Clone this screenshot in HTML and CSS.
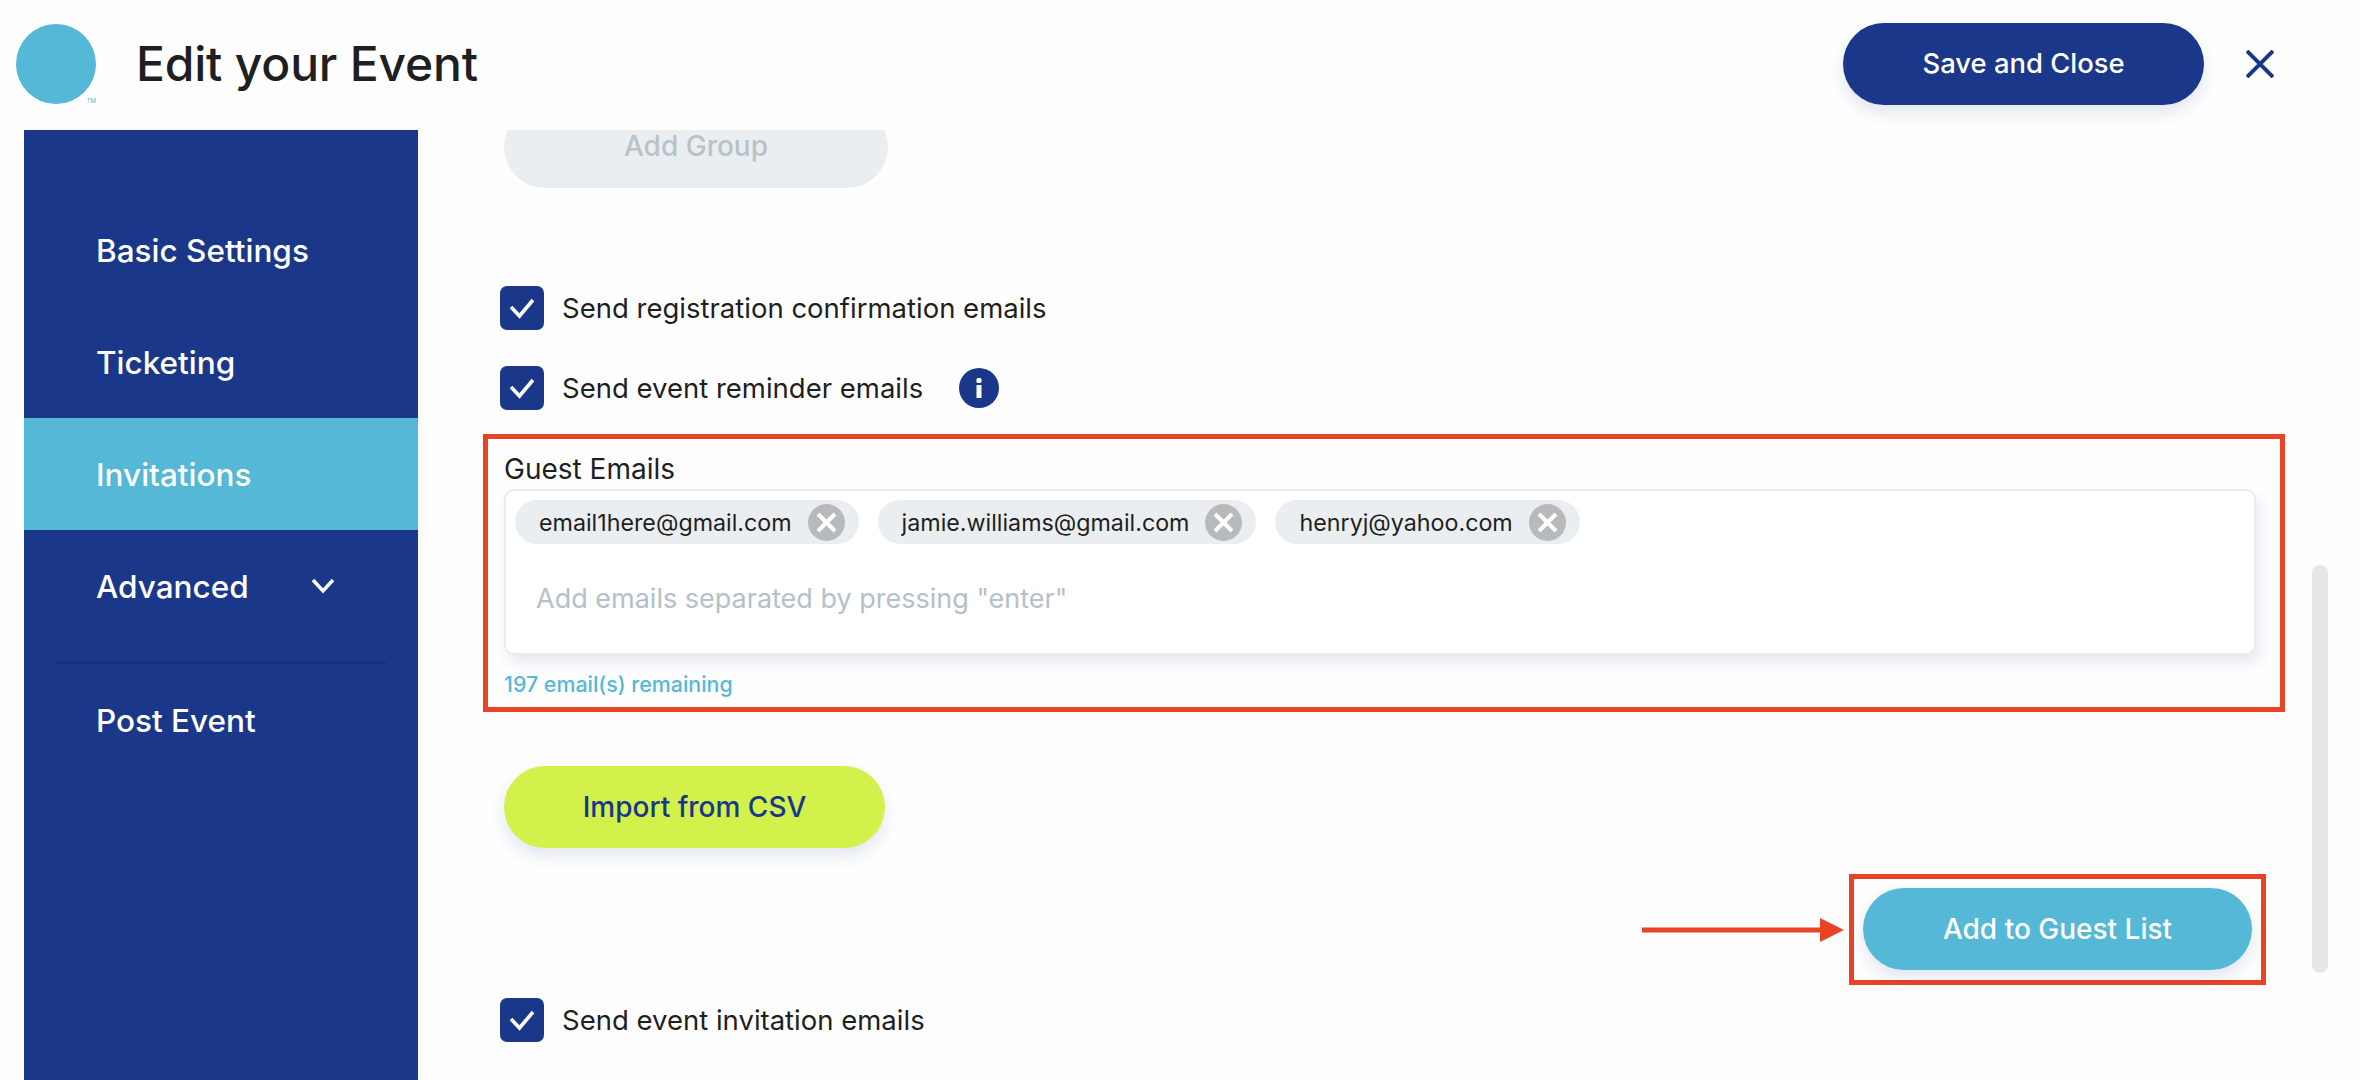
FILE: index.html
```html
<!DOCTYPE html>
<html lang="en">
<head>
    <meta charset="UTF-8">
    <meta name="viewport" content="width=device-width, initial-scale=1.0">
    <title>Edit your Event</title>
    <link rel="stylesheet" href="styles.css">
</head>
<body>
    <header class="top-bar">
        <div class="logo"><span class="logo-tm">TM</span></div>
        <h1>Edit your Event</h1>
        <button class="btn btn-navy save-btn">Save and Close</button>
        <svg class="close-icon" viewBox="0 0 28 28" fill="none" stroke="#1a378a" stroke-width="4">
            <path d="M1 1L27 27M27 1L1 27"/>
        </svg>
    </header>

    <div class="layout">
        <nav class="sidebar">
            <a class="nav-item">Basic Settings</a>
            <a class="nav-item">Ticketing</a>
            <a class="nav-item active">Invitations</a>
            <a class="nav-item">Advanced
                <svg class="chevron" viewBox="0 0 24 16" fill="none" stroke="#fff" stroke-width="3.5">
                    <path d="M2 2L12 13L22 2"/>
                </svg>
            </a>
            <div class="nav-divider"></div>
            <a class="nav-item">Post Event</a>
        </nav>

        <main class="content">
            <button class="btn add-group">Add Group</button>

            <label class="check-row first-check">
                <span class="checkbox"><svg viewBox="0 0 44 44" fill="none" stroke="#fff" stroke-width="3.6"><path d="M11 21L19.5 30L33 14"/></svg></span>
                Send registration confirmation emails
            </label>
            <label class="check-row second-check">
                <span class="checkbox"><svg viewBox="0 0 44 44" fill="none" stroke="#fff" stroke-width="3.6"><path d="M11 21L19.5 30L33 14"/></svg></span>
                Send event reminder emails
                <svg class="info-icon" viewBox="0 0 40 40">
                    <circle cx="20" cy="20" r="20" fill="#1a378a"/>
                    <rect x="17.5" y="10" width="5" height="5" rx="1.5" fill="#fff"/>
                    <rect x="17.5" y="17" width="5" height="13" fill="#fff"/>
                </svg>
            </label>

            <section class="guest-box">
                <div class="guest-label">Guest Emails</div>
                <div class="email-input">
                    <div class="tags">
                        <span class="tag">email1here@gmail.com<span class="tag-x"><svg viewBox="0 0 37 37" fill="none" stroke="#fff" stroke-width="4"><path d="M10 10L27 27M27 10L10 27"/></svg></span></span>
                        <span class="tag">jamie.williams@gmail.com<span class="tag-x"><svg viewBox="0 0 37 37" fill="none" stroke="#fff" stroke-width="4"><path d="M10 10L27 27M27 10L10 27"/></svg></span></span>
                        <span class="tag">henryj@yahoo.com<span class="tag-x"><svg viewBox="0 0 37 37" fill="none" stroke="#fff" stroke-width="4"><path d="M10 10L27 27M27 10L10 27"/></svg></span></span>
                    </div>
                    <div class="placeholder">Add emails separated by pressing "enter"</div>
                </div>
                <div class="remaining">197 email(s) remaining</div>
            </section>

            <button class="btn btn-lime import-btn">Import from CSV</button>

            <div class="add-row">
                <svg class="arrow" viewBox="0 0 202 24">
                    <rect x="0" y="9.5" width="180" height="5" fill="#e94326"/>
                    <path d="M178 0L202 12L178 24Z" fill="#e94326"/>
                </svg>
                <div class="add-box">
                    <button class="btn btn-blue add-btn">Add to Guest List</button>
                </div>
            </div>

            <label class="check-row last-check">
                <span class="checkbox"><svg viewBox="0 0 44 44" fill="none" stroke="#fff" stroke-width="3.6"><path d="M11 21L19.5 30L33 14"/></svg></span>
                Send event invitation emails
            </label>
        </main>
    </div>

    <div class="scroll-thumb"></div>
</body>
</html>
```

FILE: styles.css
```css
* {
    box-sizing: border-box;
    margin: 0;
    padding: 0;
}

html, body {
    height: 100%;
    overflow: hidden;
}

body {
    font-family: 'Inter', sans-serif;
    background-color: #fefefe;
    color: #1e1f21;
}

.top-bar {
    display: flex;
    align-items: center;
    height: 130px;
    padding-left: 16px;
    padding-bottom: 2px;
}

.logo {
    position: relative;
    width: 80px;
    height: 80px;
    border-radius: 50%;
    background-color: #55b8d7;
    flex-shrink: 0;
}

.logo-tm {
    position: absolute;
    right: 0;
    bottom: 0;
    font-size: 6px;
    color: #55b8d7;
}

h1 {
    margin-left: 40px;
    margin-bottom: 2px;
    font-size: 48px;
    font-weight: 500;
    letter-spacing: -0.2px;
}

.btn {
    display: block;
    height: 82px;
    border: none;
    border-radius: 41px;
    font-family: 'Inter', sans-serif;
    font-size: 28px;
    font-weight: 500;
}

.btn-navy {
    background-color: #1a378a;
    color: white;
    box-shadow: 0 8px 16px rgba(27, 56, 137, 0.12);
}

.btn-lime {
    background-color: #d2f14a;
    color: #1a378a;
    box-shadow: 0 8px 16px rgba(27, 56, 137, 0.12);
}

.btn-blue {
    background-color: #55b8d7;
    color: white;
    box-shadow: 0 8px 16px rgba(27, 56, 137, 0.12);
}

.save-btn {
    width: 361px;
    margin-left: auto;
    padding-bottom: 2px;
    font-size: 27.4px;
}

.close-icon {
    width: 28px;
    height: 28px;
    margin-left: 42px;
    margin-right: 86px;
}

.layout {
    display: flex;
    height: 950px;
    padding-left: 24px;
}

.sidebar {
    width: 394px;
    flex-shrink: 0;
    padding-top: 64px;
    background-color: #1a378a;
    box-shadow: 4px 0 8px rgba(27, 56, 137, 0.03);
}

.nav-item {
    display: flex;
    align-items: center;
    height: 112px;
    padding-left: 72px;
    color: white;
    font-size: 31.5px;
    font-weight: 500;
}

.nav-item.active {
    background-color: #55b8d7;
}

.chevron {
    width: 24px;
    height: 16px;
    margin-left: 62px;
}

.nav-divider {
    height: 2px;
    margin: 20px 32px 0;
    background-color: #162f78;
}

.content {
    flex: 1;
    overflow: hidden;
    padding-left: 82px;
}

.add-group {
    width: 384px;
    margin-top: -24px;
    margin-left: 4px;
    padding-bottom: 2px;
    background-color: #eaeef1;
    color: #b8c2ca;
}

.check-row {
    display: flex;
    align-items: center;
    font-size: 27.5px;
    line-height: 44px;
}

.first-check {
    margin-top: 98px;
}

.second-check {
    margin-top: 36px;
}

.last-check {
    margin-top: 13px;
}

.checkbox {
    display: block;
    width: 44px;
    height: 44px;
    margin-right: 18px;
    border-radius: 7px;
    background-color: #1a378a;
}

.checkbox svg {
    display: block;
}

.info-icon {
    width: 40px;
    height: 40px;
    margin-left: 36px;
}

.guest-box {
    width: 1802px;
    height: 278px;
    margin-top: 24px;
    margin-left: -17px;
    padding: 15px 24px 0 16px;
    border: 5px solid #e94326;
}

.guest-label {
    font-size: 28px;
    line-height: 30px;
    margin-bottom: 5px;
}

.email-input {
    height: 166px;
    padding: 9px 9px;
    background-color: white;
    border: 2px solid #e9edf2;
    border-radius: 10px;
    box-shadow: 4px 8px 14px rgba(27, 56, 137, 0.1);
}

.tags {
    display: flex;
    gap: 19px;
}

.tag {
    display: flex;
    align-items: center;
    height: 44px;
    padding: 0 14px 0 24px;
    border-radius: 22px;
    background-color: #eaeef1;
    font-size: 23.25px;
}

.tag-x {
    display: block;
    width: 37px;
    height: 37px;
    margin-left: 16px;
    border-radius: 50%;
    background-color: #b7b9bb;
}

.tag-x svg {
    display: block;
}

.placeholder {
    margin-top: 39px;
    padding-left: 21px;
    font-size: 27px;
    line-height: 32px;
    color: #b5c0c9;
}

.remaining {
    margin-top: 16px;
    font-size: 21.4px;
    font-weight: 500;
    line-height: 26px;
    color: #55b8d7;
}

.import-btn {
    width: 381px;
    margin-top: 54px;
    margin-left: 4px;
}

.add-row {
    display: flex;
    align-items: center;
    margin-top: 26px;
    margin-left: 1142px;
}

.arrow {
    width: 202px;
    height: 24px;
    margin-right: 5px;
}

.add-box {
    width: 417px;
    height: 111px;
    padding: 9px 9px;
    border: 5px solid #e94326;
}

.add-btn {
    width: 389px;
}

/* fake scrollbar thumb */
.scroll-thumb {
    position: absolute;
    left: 2312px;
    top: 565px;
    width: 16px;
    height: 408px;
    border-radius: 8px;
    background-color: #e6e6e6;
}
```
